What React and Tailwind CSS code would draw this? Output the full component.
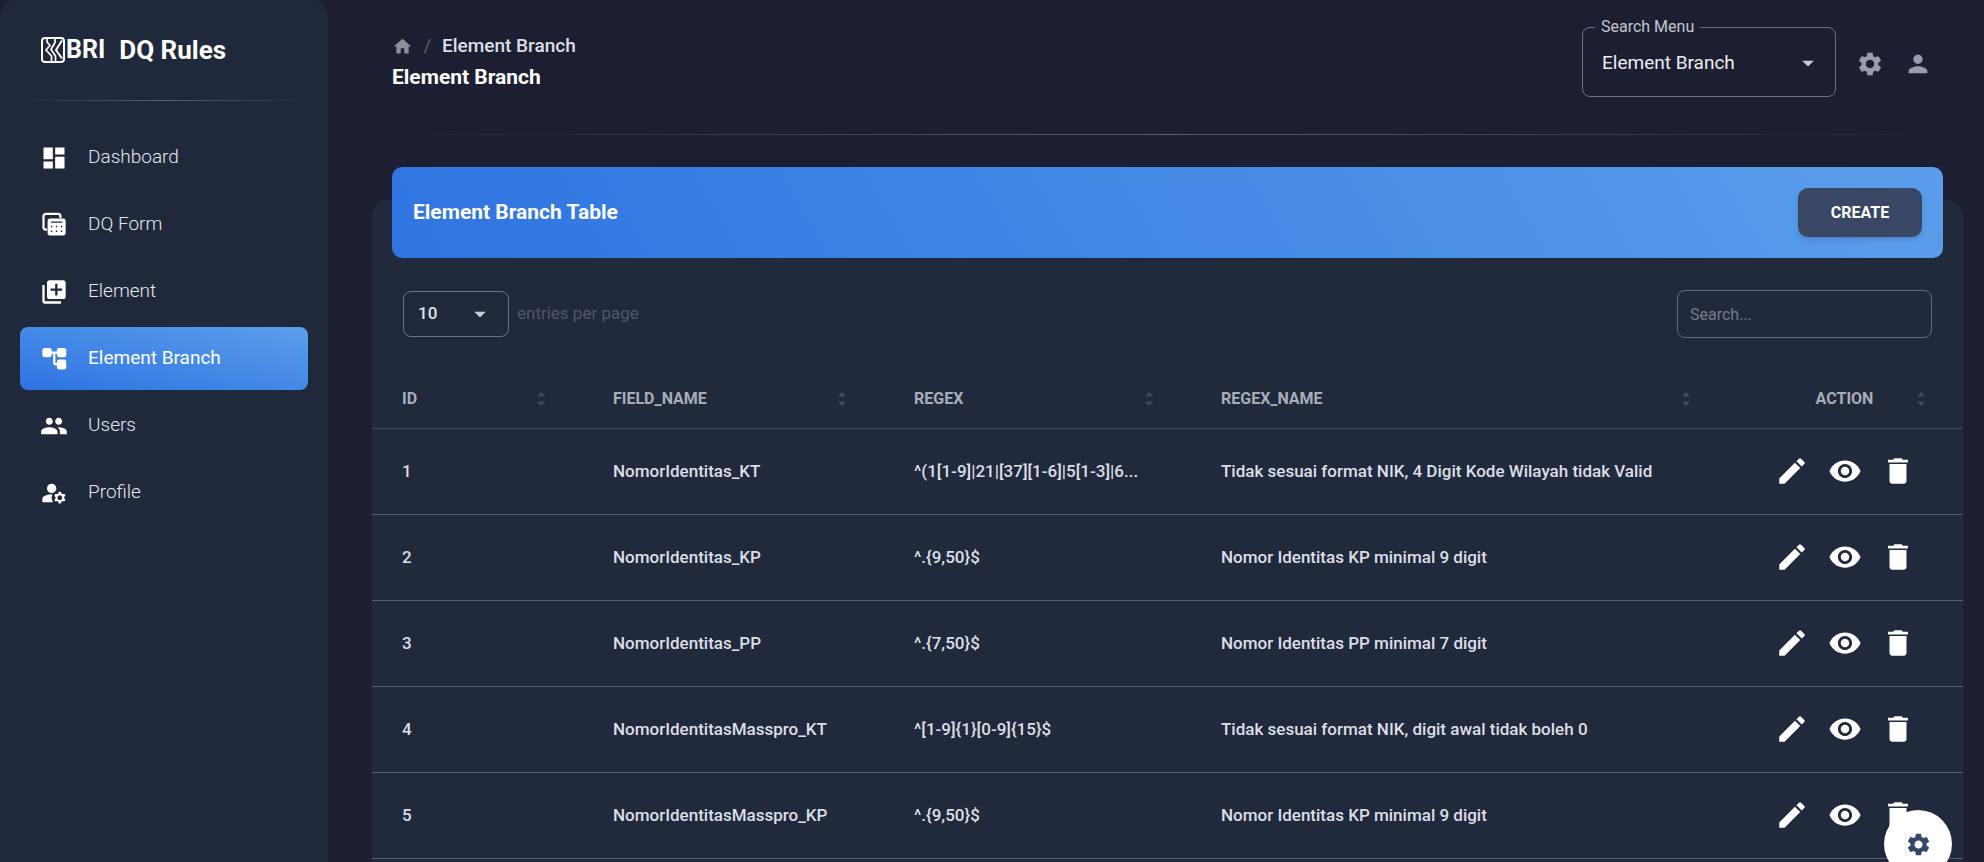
import React from "react";
import {
  MdDashboard,
  MdLibraryAdd,
  MdPeople,
  MdManageAccounts,
  MdHome,
  MdSettings,
  MdPerson,
  MdArrowDropDown,
  MdEdit,
  MdVisibility,
  MdDelete,
} from "react-icons/md";

function TableStackIcon({ size = 28 }) {
  return (
    <svg width={size} height={size} viewBox="0 0 24 24" fill="none" aria-hidden="true">
      <path
        d="M6 16H5a2 2 0 0 1-2-2V4.500a2 2 0 0 1 2-2h10.500a2 2 0 0 1 2 2V6"
        stroke="currentColor"
        strokeWidth="1.900"
      />
      <path
        fillRule="evenodd"
        fill="currentColor"
        d="M8.500 6.500H20a2 2 0 0 1 2 2V19a2 2 0 0 1-2 2H8.500a2 2 0 0 1-2-2V8.500a2 2 0 0 1 2-2zM9.500 8.900h9.500v1.200H9.500zM9.300 12.700h1.200v1.200H9.300zM13.600 12.700h1.200v1.200h-1.200zM17.900 12.700h1.200v1.200h-1.200zM9.300 16.700h1.200v1.200H9.300zM13.600 16.700h1.200v1.200h-1.200zM17.900 16.700h1.200v1.200h-1.200z"
      />
    </svg>
  );
}

function BranchIcon({ size = 28 }) {
  return (
    <svg width={size} height={size} viewBox="0 0 24 24" fill="currentColor" aria-hidden="true">
      <rect x="2" y="2.500" width="8" height="8" rx="2" />
      <rect x="14.500" y="2.500" width="8" height="8" rx="2" />
      <rect x="14.500" y="12.500" width="8" height="8.500" rx="2" />
      <path d="M9 6.500h7M12.200 6.500v8.200a1.800 1.800 0 0 0 1.800 1.800h2" fill="none" stroke="currentColor" strokeWidth="2" />
    </svg>
  );
}

function LogoMark() {
  return (
    <svg width="24" height="26" viewBox="0 0 24 26" fill="none" stroke="currentColor" aria-hidden="true">
      <rect x="1" y="1" width="22" height="24" rx="3" strokeWidth="2" />
      <path d="M6 1.500v3.500l3 3.500-4 4.500 5.500 6v5.500" strokeWidth="1.700" />
      <path d="M14 1.500v4l-4 7 4.500 6.500v5.500" strokeWidth="1.700" />
      <path d="M21 3.500l-6 9.500 6 8.500" strokeWidth="2" />
    </svg>
  );
}

function SortIcon() {
  return (
    <svg width="8" height="16" viewBox="0 0 8 16" fill="currentColor" aria-hidden="true">
      <path d="M0 5.500 4 1l4 4.500zM0 10.500h8L4 15z" />
    </svg>
  );
}

const navItems = [
  { label: "Dashboard", icon: MdDashboard },
  { label: "DQ Form", icon: TableStackIcon },
  { label: "Element", icon: MdLibraryAdd },
  { label: "Element Branch", icon: BranchIcon, active: true },
  { label: "Users", icon: MdPeople },
  { label: "Profile", icon: MdManageAccounts },
];

const columns = ["ID", "FIELD_NAME", "REGEX", "REGEX_NAME", "ACTION"];

const rows = [
  [1, "NomorIdentitas_KT", "^(1[1-9]|21|[37][1-6]|5[1-3]|6...", "Tidak sesuai format NIK, 4 Digit Kode Wilayah tidak Valid"],
  [2, "NomorIdentitas_KP", "^.{9,50}$", "Nomor Identitas KP minimal 9 digit"],
  [3, "NomorIdentitas_PP", "^.{7,50}$", "Nomor Identitas PP minimal 7 digit"],
  [4, "NomorIdentitasMasspro_KT", "^[1-9]{1}[0-9]{15}$", "Tidak sesuai format NIK, digit awal tidak boleh 0"],
  [5, "NomorIdentitasMasspro_KP", "^.{9,50}$", "Nomor Identitas KP minimal 9 digit"],
];

function Sidebar() {
  return (
    <aside className="w-[328px] shrink-0 rounded-t-2xl bg-[#20283b] px-5">
      <a href="#" className="flex h-[100px] items-center pl-[21px] text-white">
        <LogoMark />
        <span className="ml-px text-[25px] font-bold">BRI</span>
        <span className="ml-[14px] text-[26px] font-bold">DQ Rules</span>
      </a>
      <div className="h-px bg-gradient-to-r from-transparent via-[#5a6174] to-transparent" />
      <nav className="mt-[25px] flex flex-col gap-1">
        {navItems.map(({ label, icon: Icon, active }) => (
          <a
            key={label}
            href="#"
            aria-current={active ? "page" : undefined}
            className={
              active
                ? "flex h-[63px] items-center gap-5 rounded-lg bg-gradient-to-tr from-[#2f73e2] to-[#5a9eea] pl-[20px] text-[19px] text-white"
                : "flex h-[63px] items-center gap-5 rounded-lg pl-[20px] text-[19px] font-light text-[#e4e7ee]"
            }
          >
            <span className="text-white">
              <Icon size={28} />
            </span>
            {label}
          </a>
        ))}
      </nav>
    </aside>
  );
}

function Header() {
  return (
    <header className="flex items-center justify-between px-5 pt-[17px]">
      <div className="pt-[10px]">
        <div className="flex h-[31px] items-center text-[19px]">
          <a href="#" aria-label="Home" className="text-[#8d909c]">
            <MdHome size={21} />
          </a>
          <span className="w-[29px] text-center text-[#5b5f6e]">/</span>
          <span className="font-medium text-[#dcdee5]">Element Branch</span>
        </div>
        <h1 className="text-[21px] leading-[31px] font-bold text-white">Element Branch</h1>
      </div>
      <div className="flex items-center">
        <fieldset className="h-[80px] w-[254px] rounded-lg border border-[#6d7080] pr-[13px] pl-3">
          <legend className="px-[6px] text-[16px] leading-[20px] text-[#c3c6cf]">
            <label htmlFor="menu">Search Menu</label>
          </legend>
          <div className="flex h-[52px] items-center">
            <select
              id="menu"
              className="min-w-0 flex-1 appearance-none bg-transparent pl-[7px] text-[19px] text-[#eceef3] outline-none"
            >
              <option>Element Branch</option>
            </select>
            <MdArrowDropDown size={28} className="pointer-events-none text-[#c9ccd4]" />
          </div>
        </fieldset>
        <div className="flex gap-5 pt-[14px] pr-[11px] pl-5 text-[#9b9eaa]">
          <button type="button" aria-label="Settings">
            <MdSettings size={28} />
          </button>
          <button type="button" aria-label="Account">
            <MdPerson size={28} />
          </button>
        </div>
      </div>
    </header>
  );
}

function BranchTable() {
  return (
    <table className="w-full table-fixed border-collapse text-left">
      <colgroup>
        <col className="w-[211px]" />
        <col className="w-[301px]" />
        <col className="w-[307px]" />
        <col className="w-[537px]" />
        <col className="w-[235px]" />
      </colgroup>
      <thead>
        <tr className="border-b border-[#414960]">
          {columns.map((name) => (
            <th
              key={name}
              scope="col"
              className="pt-[49px] pr-[38px] pb-[17px] pl-[30px] text-[16px] leading-[24px] font-bold text-[#a9adb9]"
            >
              <div className="flex items-center justify-between">
                <span className={name === "ACTION" ? "flex-1 pl-[14px] text-center" : ""}>{name}</span>
                <span className="text-[#444b5f]">
                  <SortIcon />
                </span>
              </div>
            </th>
          ))}
        </tr>
      </thead>
      <tbody>
        {rows.map(([id, field, regex, name]) => (
          <tr key={id} className="h-[86px] border-b border-[#565d70] text-[17px] font-medium text-[#dcdfe6]">
            <td className="pl-[30px]">{id}</td>
            <td className="pl-[30px]">{field}</td>
            <td className="pl-[30px]">{regex}</td>
            <td className="pl-[30px]">{name}</td>
            <td>
              <div className="flex items-center justify-center gap-[19px] pr-px pb-[2px] text-white">
                <button type="button" aria-label="Edit">
                  <MdEdit size={34} />
                </button>
                <button type="button" aria-label="View">
                  <MdVisibility size={34} />
                </button>
                <button type="button" aria-label="Delete">
                  <MdDelete size={34} />
                </button>
              </div>
            </td>
          </tr>
        ))}
      </tbody>
    </table>
  );
}

export default function App() {
  return (
    <div className="flex min-h-screen bg-[#1b1f31] font-[Roboto,'Liberation_Sans',sans-serif]">
      <Sidebar />
      <main className="flex min-w-0 flex-1 flex-col pr-[21px] pl-[44px]">
        <Header />
        <div className="mx-5 mt-[37px] h-px bg-gradient-to-r from-transparent via-[#5a5e6f] to-transparent" />
        <section className="mt-[65px] flex-1 rounded-t-2xl bg-[#21293d]">
          <div className="mx-5 -mt-[33px] flex h-[91px] items-center justify-between rounded-[10px] bg-[linear-gradient(60deg,#2f74e1,#5a9eea)] px-[21px]">
            <h2 className="text-[21px] font-bold text-white">Element Branch Table</h2>
            <button
              type="button"
              className="h-[49px] w-[124px] rounded-[10px] bg-[#394764] text-[16px] font-bold text-white shadow-md"
            >
              CREATE
            </button>
          </div>
          <div className="mt-8 flex h-12 items-center justify-between px-[31px]">
            <div className="flex items-center gap-2">
              <div className="flex h-[46px] w-[106px] items-center rounded-lg border border-[#6b7284] px-[14px]">
                <select
                  id="entries"
                  className="min-w-0 flex-1 appearance-none bg-transparent text-[17px] font-medium text-[#dfe2e9] outline-none"
                >
                  <option>10</option>
                </select>
                <MdArrowDropDown size={28} className="pointer-events-none text-[#c9ccd4]" />
              </div>
              <label htmlFor="entries" className="text-[17px] text-[#50576a]">
                entries per page
              </label>
            </div>
            <input
              type="search"
              aria-label="Search"
              placeholder="Search..."
              className="h-12 w-[255px] rounded-lg border border-[#646b7e] bg-transparent px-3 text-[16px] text-white outline-none placeholder:text-[#757b8b]"
            />
          </div>
          <BranchTable />
        </section>
      </main>
      <button
        type="button"
        aria-label="Configure"
        className="fixed right-[32px] -bottom-4 flex size-[68px] items-center justify-center rounded-full bg-white text-[#344767] shadow-md"
      >
        <MdSettings size={27} />
      </button>
    </div>
  );
}
